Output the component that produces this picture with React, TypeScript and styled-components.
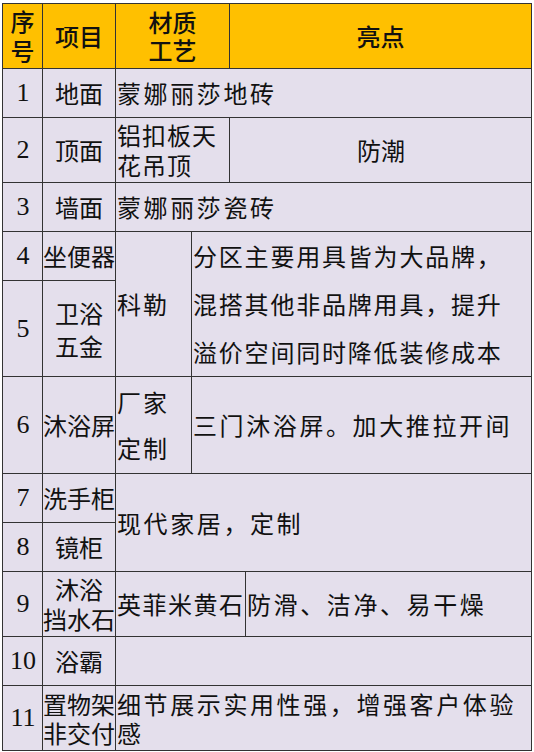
import styled, { createGlobalStyle } from "styled-components";

const GlobalStyle = createGlobalStyle`
  html, body {
    margin: 0;
    padding: 0;
    background: #ffffff;
  }
`;

const Page = styled.div`
  padding: 3px 0 0 2px;
`;

const Table = styled.table`
  width: 529px;
  table-layout: fixed;
  border-collapse: collapse;
  font-family: "Noto Sans CJK SC", "Liberation Serif", sans-serif;
  font-size: 24px;
  color: #111;
`;

const Row = styled.tr<{ $h: number }>`
  height: ${(p) => p.$h}px;
`;

const HeadCell = styled.th<{ $lh?: number }>`
  background: #ffc000;
  border: 1px solid #333;
  padding: 0;
  font-weight: 500;
  text-align: center;
  vertical-align: middle;
  line-height: ${(p) => p.$lh ?? 30}px;
`;

const Cell = styled.td<{ $align?: string; $lh?: number; $ls?: number }>`
  background: #e4dfec;
  border: 1px solid #333;
  padding: 0 0 0 1px;
  text-align: ${(p) => p.$align ?? "left"};
  vertical-align: middle;
  line-height: ${(p) => p.$lh ?? 30}px;
  letter-spacing: ${(p) => p.$ls ?? 0}px;
  overflow: hidden;
  word-break: break-all;
`;

const Num = styled(Cell)`
  font-family: "Liberation Serif", serif;
  font-size: 26px;
  text-align: center;
`;

const Item = styled(Cell)`
  text-align: center;
  padding: 0;
`;

export default function App() {
  return (
    <Page>
      <GlobalStyle />
      <Table>
        <colgroup>
          <col style={{ width: 40 }} />
          <col style={{ width: 73 }} />
          <col style={{ width: 76 }} />
          <col style={{ width: 38 }} />
          <col style={{ width: 16 }} />
          <col style={{ width: 286 }} />
        </colgroup>
        <tbody>
          <Row $h={65}>
            <HeadCell>序号</HeadCell>
            <HeadCell>项目</HeadCell>
            <HeadCell colSpan={2} $lh={28}>材质<br />工艺</HeadCell>
            <HeadCell colSpan={2}>亮点</HeadCell>
          </Row>
          <Row $h={49}>
            <Num>1</Num>
            <Item>地面</Item>
            <Cell colSpan={4} $ls={2.6}>蒙娜丽莎地砖</Cell>
          </Row>
          <Row $h={65}>
            <Num>2</Num>
            <Item>顶面</Item>
            <Cell colSpan={2} $lh={30} $ls={1}>铝扣板天花吊顶</Cell>
            <Cell colSpan={2} $align="center">防潮</Cell>
          </Row>
          <Row $h={49}>
            <Num>3</Num>
            <Item>墙面</Item>
            <Cell colSpan={4} $ls={2.6}>蒙娜丽莎瓷砖</Cell>
          </Row>
          <Row $h={49}>
            <Num>4</Num>
            <Item>坐便器</Item>
            <Cell rowSpan={2} $ls={2}>科勒</Cell>
            <Cell rowSpan={2} colSpan={3} $lh={48} $ls={1.8}>
              分区主要用具皆为大品牌，<br />
              混搭其他非品牌用具，提升<br />
              溢价空间同时降低装修成本
            </Cell>
          </Row>
          <Row $h={95}>
            <Num>5</Num>
            <Item $lh={33}>卫浴<br />五金</Item>
          </Row>
          <Row $h={97}>
            <Num>6</Num>
            <Item>沐浴屏</Item>
            <Cell $lh={46} $ls={2}>厂家<br />定制</Cell>
            <Cell colSpan={3} $ls={2.6}>三门沐浴屏。加大推拉开间</Cell>
          </Row>
          <Row $h={49}>
            <Num>7</Num>
            <Item>洗手柜</Item>
            <Cell rowSpan={2} colSpan={4} $ls={2.6}>现代家居，定制</Cell>
          </Row>
          <Row $h={49}>
            <Num>8</Num>
            <Item>镜柜</Item>
          </Row>
          <Row $h={65}>
            <Num>9</Num>
            <Item>沐浴<br />挡水石</Item>
            <Cell colSpan={3} $ls={1.5}>英菲米黄石</Cell>
            <Cell $ls={2.6}>防滑、洁净、易干燥</Cell>
          </Row>
          <Row $h={49}>
            <Num>10</Num>
            <Item>浴霸</Item>
            <Cell colSpan={4} />
          </Row>
          <Row $h={65}>
            <Num>11</Num>
            <Item $lh={29}>置物架<br />非交付</Item>
            <Cell colSpan={4} $lh={29} $ls={2.6}>细节展示实用性强，增强客户体验感</Cell>
          </Row>
        </tbody>
      </Table>
    </Page>
  );
}
